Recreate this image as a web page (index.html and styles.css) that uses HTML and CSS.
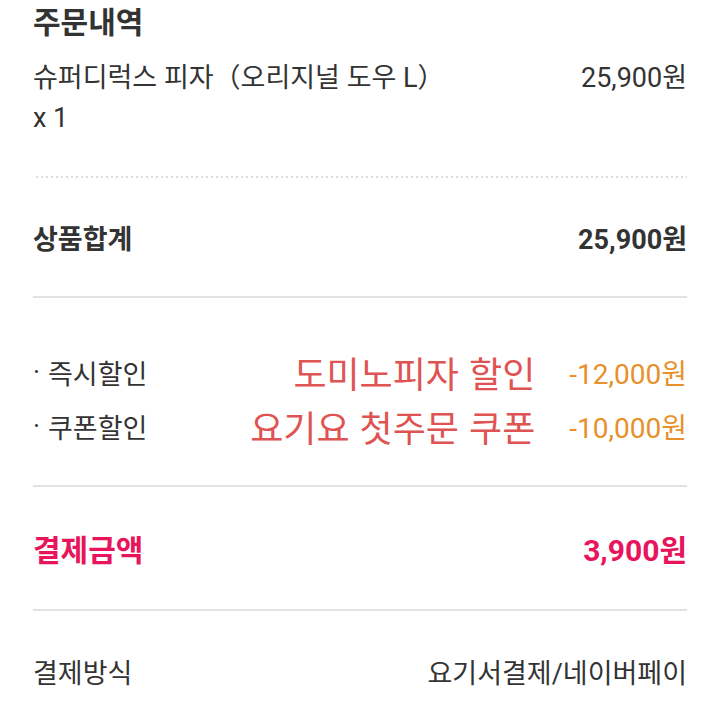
FILE: index.html
```html
<!DOCTYPE html>
<html lang="ko">
<head>
<meta charset="utf-8">
<link rel="stylesheet" href="styles.css">
</head>
<body>
<div class="page">
  <h1 class="title">주문내역</h1>
  <div class="item">
    <div class="item-name">슈퍼디럭스 피자（오리지널 도우 L）<br>x 1</div>
    <div class="price">25,900원</div>
  </div>
  <div class="dotted"></div>
  <div class="row bold subtotal">
    <span>상품합계</span>
    <span>25,900원</span>
  </div>
  <div class="rule"></div>
  <div class="discounts">
    <div class="drow">
      <span class="dot">·</span><span class="dlabel">즉시할인</span>
      <span class="note">도미노피자 할인</span>
      <span class="damount">-12,000원</span>
    </div>
    <div class="drow">
      <span class="dot">·</span><span class="dlabel">쿠폰할인</span>
      <span class="note">요기요 첫주문 쿠폰</span>
      <span class="damount">-10,000원</span>
    </div>
  </div>
  <div class="rule"></div>
  <div class="row bold total">
    <span>결제금액</span>
    <span>3,900원</span>
  </div>
  <div class="rule"></div>
  <div class="row method">
    <span>결제방식</span>
    <span>요기서결제/네이버페이</span>
  </div>
</div>
</body>
</html>
```
FILE: styles.css
```css
html, body {
  margin: 0;
  padding: 0;
  background: #ffffff;
}
body {
  font-family: "Roboto", "Noto Sans CJK KR", sans-serif;
  color: #333333;
  font-size: 27px;
}
.page {
  padding: 0 33px 0 33px;
}
.title {
  margin: 0;
  font-size: 30px;
  font-weight: 700;
  line-height: 46px;
  color: #333333;
}
.item {
  display: flex;
  justify-content: space-between;
  align-items: flex-start;
  padding-top: 12px;
  line-height: 40px;
}
.dotted {
  margin-top: 38px;
  margin-left: 3px;
  height: 2px;
  background-image: linear-gradient(to right, #dcdcdc 2px, transparent 2px);
  background-size: 5px 2px;
}
.row {
  display: flex;
  justify-content: space-between;
  align-items: center;
}
.bold {
  font-weight: 700;
}
.subtotal {
  height: 118px;
}
.rule {
  height: 2px;
  background: #e2e2e2;
}
.discounts {
  padding: 47px 0 32px;
}
.drow {
  display: flex;
  align-items: center;
  height: 54px;
}
.dot {
  width: 15px;
}
.dlabel {
  flex: 1;
}
.note {
  color: #e05353;
  font-family: "Noto Sans CJK KR", sans-serif;
  font-size: 36px;
  margin-right: 34px;
}
.damount {
  color: #e8902a;
  font-size: 28px;
}
.total {
  height: 122px;
  color: #e8155c;
  font-size: 30px;
}
.method {
  height: 120px;
}
```
